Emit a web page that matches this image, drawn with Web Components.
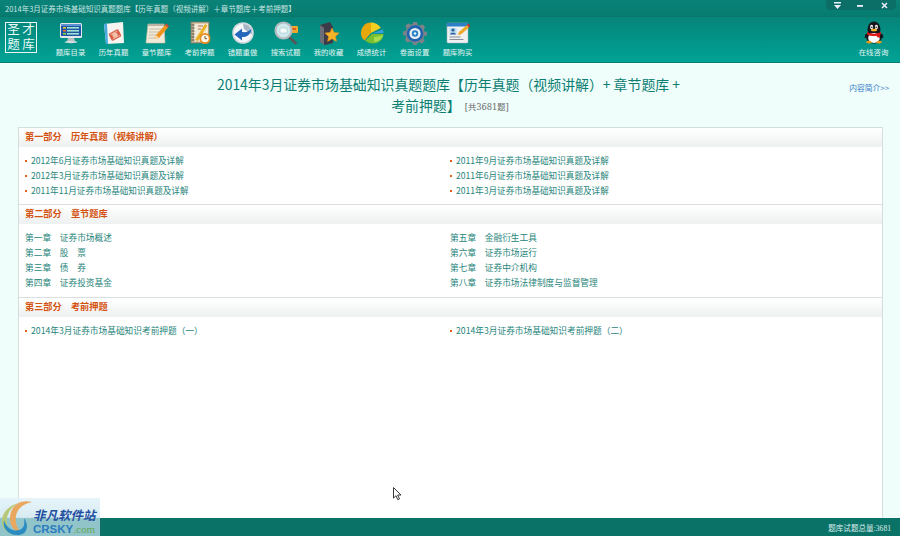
<!DOCTYPE html>
<html lang="zh"><head><meta charset="utf-8"><title>题库</title>
<style>
html,body{margin:0;padding:0;background:#effdfb}
body{font-family:"Noto Sans CJK SC","Liberation Sans",sans-serif}
svg{display:block}
</style></head><body>
<app-shell>
  <title-bar>2014年3月证券市场基础知识真题题库【历年真题（视频讲解）＋章节题库＋考前押题】</title-bar>
  <tool-bar>
    <tool-item label="题库目录"><svg width="24" height="24" viewBox="0 0 24 24"><rect x="1" y="2" width="22" height="15" rx="1.5" fill="#e4e8ea"/><rect x="2" y="3" width="20" height="12" fill="#1d57a6"/><rect x="2" y="3" width="20" height="2" fill="#5c93d0"/><rect x="4" y="6" width="3" height="1.6" fill="#f0c030"/><rect x="8" y="6" width="12" height="1.6" fill="#9fe0d0"/><rect x="4" y="9" width="3" height="1.6" fill="#e66a30"/><rect x="8" y="9" width="12" height="1.6" fill="#9fe0d0"/><rect x="4" y="12" width="3" height="1.6" fill="#8fd040"/><rect x="8" y="12" width="12" height="1.6" fill="#9fe0d0"/><path d="M9 17h6l1 3H8z" fill="#b7bec2"/><ellipse cx="12" cy="21" rx="6.5" ry="1.2" fill="#d8dde0"/></svg></tool-item>
    <tool-item label="历年真题"><svg width="24" height="24" viewBox="0 0 24 24"><path d="M2 3l19-2 1 21-18 1z" fill="#f6f4f0"/><path d="M2 3l3-.3 1 20.200-2 .1z" fill="#4aa8e0"/><g transform="rotate(-28 13 14)"><rect x="7.5" y="10" width="11" height="8" rx="1.5" fill="#d8604a"/><circle cx="13" cy="14" r="2.6" fill="#f3c0a8"/><rect x="9" y="11" width="8" height="1" fill="#f3b8a8"/><rect x="9" y="16" width="8" height="1" fill="#f3b8a8"/></g></svg></tool-item>
    <tool-item label="章节题库"><svg width="24" height="24" viewBox="0 0 24 24"><path d="M3 3h16l1 19H1z" fill="#f2ead8" stroke="#c9bfa8" stroke-width=".6"/><path d="M3 3h16v2H3z" fill="#b9b2a2"/><path d="M4 8h12M4 11h11M3.700 14h9M3.400 17h7" stroke="#b9b3a3" stroke-width=".8"/><path d="M9 18l2-4L20 4l3 2.500-9 10.500z" fill="#f0921e"/><path d="M20 4l1.500-1.500 2.500 2.500L23 6.500z" fill="#d84a30"/><path d="M9 18l2-4 3 3z" fill="#f6d9a8"/></svg></tool-item>
    <tool-item label="考前押题"><svg width="24" height="24" viewBox="0 0 24 24"><rect x="3" y="1" width="18" height="21" fill="#c2ad8a" stroke="#84765e" stroke-width=".7"/><rect x="6" y="2.500" width="14" height="18" fill="#f1ead9"/><path d="M3.500 4h3M3.500 7h3M3.500 10h3M3.500 13h3M3.500 16h3M3.500 19h3" stroke="#555" stroke-width="1"/><path d="M7 19L17 3l2.500 1.500L10 20z" fill="#e9b020"/><path d="M10 5h5M10 8h3" stroke="#b45a42" stroke-width=".9"/><circle cx="17" cy="17.500" r="5.500" fill="#e98a1c"/><circle cx="17" cy="17.500" r="3.800" fill="#fbf7e6"/><path d="M17 15v2.700h2" stroke="#6a4a20" stroke-width=".9" fill="none"/></svg></tool-item>
    <tool-item label="错题重做"><svg width="24" height="24" viewBox="0 0 24 24"><circle cx="12" cy="12" r="10.800" fill="#cfd6dc"/><circle cx="12" cy="12" r="9.300" fill="#f5f7f8"/><path d="M12 3a9 9 0 0 1 8.800 10.500L13 8z" fill="#a5b6c6"/><path d="M20.500 8c-1 6-5 8.500-9.500 8v3.500L3.500 13.500 11 7.500v3.500c4 .5 7-.5 9.500-3z" fill="#2666bd"/></svg></tool-item>
    <tool-item label="搜索试题"><svg width="24" height="24" viewBox="0 0 24 24"><rect x="15" y="5" width="9" height="7" rx="1" fill="#f0a828"/><rect x="17" y="7" width="5" height="2" fill="#d8601c"/><path d="M14 15l7.500 7" stroke="#54565a" stroke-width="3" stroke-linecap="round"/><circle cx="9.500" cy="9.500" r="8" fill="#cfeaec" stroke="#b4babf" stroke-width="2.200"/><rect x="6" y="7" width="7" height="5" fill="#f2fafa" stroke="#9fc0c6" stroke-width=".5"/></svg></tool-item>
    <tool-item label="我的收藏"><svg width="24" height="24" viewBox="0 0 24 24"><path d="M3 4l10-3 3 5v16l-8 2-5-3z" fill="#3c3c48"/><path d="M3 4l4 3v17l-4-3z" fill="#6a6e78"/><path d="M15 7l2.100 4.600 5 .5-3.700 3.300 1.100 5-4.500-2.600-4.400 2.600 1-5-3.700-3.300 5.100-.5z" fill="#f5b428" stroke="#e88f18" stroke-width=".6"/></svg></tool-item>
    <tool-item label="成绩统计"><svg width="24" height="24" viewBox="0 0 24 24"><path d="M11 12V1.500C5 1.500 1 6.500 1 12c0 3 1 5.500 3.500 7.500z" fill="#e8a80c"/><path d="M11 12V1.500c4.500 0 8 2.400 9.700 5.500z" fill="#f2cf20"/><path d="M12 12.500l10.800-4c.6 1.300 .7 2.500 .7 3.500z" fill="#36a0dc"/><path d="M12 13h11.500c-.2 5.500-5 9.500-10.500 9.500-3 0-6-1-7.700-3z" fill="#78c030"/><path d="M14 16c3 0 6-1 9-2-1 4-5 7-9 7z" fill="#a8dc50"/></svg></tool-item>
    <tool-item label="卷面设置"><svg width="24" height="24" viewBox="0 0 24 24"><path d="M10 1h4l.6 2.700 2.400 1 2.400-1.400 2.800 2.800-1.400 2.400 1 2.400L24 10.500v4l-2.700.6-1 2.400 1.400 2.400-2.800 2.800-2.400-1.400-2.400 1L14 24h-4l-.6-2.700-2.400-1-2.400 1.400-2.800-2.800 1.400-2.400-1-2.400L0 14.500v-4l2.700-.6 1-2.400L2.300 5.100l2.800-2.800 2.400 1.400 2.400-1z" fill="#7d8288"/><circle cx="12" cy="12.500" r="8.300" fill="#1f62ae"/><circle cx="12" cy="12.500" r="5.600" fill="#e8eef2"/><circle cx="12" cy="12.500" r="3.200" fill="#2c7ec8"/><circle cx="12" cy="12.500" r="1.300" fill="#dff"/></svg></tool-item>
    <tool-item label="题库购买"><svg width="24" height="24" viewBox="0 0 24 24"><rect x="1" y="2" width="21" height="20" rx="1" fill="#eef0f2" stroke="#a9b2ba" stroke-width=".5"/><rect x="1" y="2" width="21" height="3.500" fill="#2f7fc8"/><rect x="3.500" y="7" width="7" height="6.500" fill="#b9dcf0"/><circle cx="7" cy="9" r="1.600" fill="#2b5e9c"/><path d="M4 13.500c.5-2.500 5.500-2.500 6 0z" fill="#2b5e9c"/><path d="M3.500 16h11M3.500 18.500h14" stroke="#8a8f96" stroke-width="1"/><path d="M12 14l1-3 8-7 2 2.500-8 7z" fill="#f0a828"/><path d="M21 4l1.500-1.500 2 2.500L23 6.500z" fill="#c8342c"/></svg></tool-item>
    <tool-item slot="right" label="在线咨询"><svg width="24" height="24" viewBox="0 0 24 24"><ellipse cx="12" cy="8.500" rx="6.500" ry="8" fill="#16161c"/><ellipse cx="12" cy="16" rx="8" ry="6.500" fill="#16161c"/><ellipse cx="12" cy="17" rx="5.800" ry="5" fill="#fbfbfb"/><ellipse cx="9.600" cy="6" rx="1.500" ry="2.200" fill="#fff"/><ellipse cx="14.400" cy="6" rx="1.500" ry="2.200" fill="#fff"/><circle cx="9.800" cy="6.200" r=".8" fill="#111"/><circle cx="14.200" cy="6.200" r=".8" fill="#111"/><ellipse cx="12" cy="9" rx="3.200" ry="1.300" fill="#f4b020"/><path d="M5 11c4 2.200 10 2.200 14 0v2.500c-4 2-10 2-14 0z" fill="#e01818"/><path d="M14.500 13.500l3-.5.500 4-3-1z" fill="#e01818"/><path d="M3.500 13l2-.5-.5 4-2.500.5zM20.500 13l-2-.5.500 4 2.500.5z" fill="#16161c"/><path d="M4 21c2-2 5-1.500 6 .8-2 1-4.500 1-6-.8zM20 21c-2-2-5-1.500-6 .8 2 1 4.500 1 6-.8z" fill="#f09a14"/></svg></tool-item>
  </tool-bar>
  <main-area>
    <page-head slot="head"></page-head>
    <section-panel heading="第一部分　历年真题（视频讲解）">
      <link-row bullet>2012年6月证券市场基础知识真题及详解</link-row>
      <link-row bullet>2011年9月证券市场基础知识真题及详解</link-row>
      <link-row bullet>2012年3月证券市场基础知识真题及详解</link-row>
      <link-row bullet>2011年6月证券市场基础知识真题及详解</link-row>
      <link-row bullet>2011年11月证券市场基础知识真题及详解</link-row>
      <link-row bullet>2011年3月证券市场基础知识真题及详解</link-row>
    </section-panel>
    <section-panel heading="第二部分　章节题库" style="--fs:8.700px;--pb:7px">
      <link-row>第一章　证券市场概述</link-row>
      <link-row>第五章　金融衍生工具</link-row>
      <link-row>第二章　股　票</link-row>
      <link-row>第六章　证券市场运行</link-row>
      <link-row>第三章　债　券</link-row>
      <link-row>第七章　证券中介机构</link-row>
      <link-row>第四章　证券投资基金</link-row>
      <link-row>第八章　证券市场法律制度与监督管理</link-row>
    </section-panel>
    <section-panel heading="第三部分　考前押题" style="--fs:8.700px">
      <link-row bullet>2014年3月证券市场基础知识考前押题（一）</link-row>
      <link-row bullet>2014年3月证券市场基础知识考前押题（二）</link-row>
    </section-panel>
  </main-area>
  <status-bar>题库试题总量:3681</status-bar>
  <site-mark></site-mark>
  <mouse-cursor></mouse-cursor>
</app-shell>
<script>
function def(name, css, html){
  customElements.define(name, class extends HTMLElement{
    constructor(){super();const s=this.attachShadow({mode:'open'});
      s.innerHTML='<style>'+css+'</style>'+(typeof html==='function'?html(this):html);}
  });
}
def('app-shell',
 ':host{display:flex;flex-direction:column;position:relative;width:900px;height:536px;overflow:hidden;background:#effdfb}',
 '<slot></slot>');
def('title-bar',
 ':host{display:flex;align-items:center;justify-content:space-between;height:16px;flex:none;background:linear-gradient(#0b8277,#067c71);color:#c8e6e2;font-size:7.500px;padding:0 4px 0 5px;box-sizing:border-box}'+
 '.ctl{display:flex;align-items:center;width:70px;height:10px;align-self:flex-start;background:#0b6f67;border-radius:0 0 4px 4px;box-sizing:border-box}'+
 '.ctl span{flex:1;display:flex;justify-content:center}',
 '<span><slot></slot></span><div class="ctl">'+
 '<span><svg width="7" height="7" viewBox="0 0 7 7" style="display:block"><rect y="0" width="7" height="1.500" fill="#eef"/><path d="M0 3h7L3.500 7z" fill="#eef"/></svg></span>'+
 '<span><svg width="7" height="7" viewBox="0 0 7 7" style="display:block"><rect y="3" width="6" height="1.800" fill="#eef"/></svg></span>'+
 '<span><svg width="7" height="7" viewBox="0 0 7 7" style="display:block"><path d="M1 1l5 5M6 1L1 6" stroke="#eef" stroke-width="1.500"/></svg></span></div>');
def('tool-bar',
 ':host{display:flex;align-items:stretch;height:47px;flex:none;box-sizing:border-box;background:linear-gradient(#06847a,#00a395);border-top:1px solid #0a766c;border-bottom:1px solid #0b7c72;padding:0 5px 0 5px}'+
 '.logo{width:32px;height:31px;margin-top:5px;margin-right:12px;border:1px solid #e8f6f4;box-sizing:border-box;color:#eafaf7;font-family:"Liberation Sans","Noto Sans CJK SC",sans-serif;font-size:12.500px;display:grid;grid-template-columns:1fr 1fr;grid-template-rows:1fr 1fr;justify-items:center;align-items:center;flex:none}'+
 '.logo span{display:block;line-height:14px}'+
 '.items{display:flex;flex:1}.right{display:flex}',
 '<div class="logo"><span>圣</span><span>才</span><span>题</span><span>库</span></div><div class="items"><slot></slot></div><div class="right"><slot name="right"></slot></div>');
def('tool-item',
 ':host{display:flex;flex-direction:column;align-items:center;width:43px;flex:none;color:#e4f6f3;font-size:7.400px;box-sizing:border-box;padding-top:4px}'+
 '.ic{height:24px;margin-bottom:2px}.lb{line-height:10px;white-space:nowrap}',
 el=>'<div class="ic"><slot></slot></div><div class="lb">'+el.getAttribute('label')+'</div>');
def('main-area',
 ':host{display:flex;flex-direction:column;flex:1;min-height:0;padding:0 17px 0 18px;position:relative}'+
 '.panel{flex:1;min-height:0;display:flex;flex-direction:column;background:#fff;border:1px solid #d3dedd;border-bottom:0}',
 '<slot name="head"></slot><div class="panel"><slot></slot></div>');
def('page-head',
 ':host{display:flex;flex-direction:column;align-items:center;flex:none;height:64px;box-sizing:border-box;padding:11px 0 0;position:relative;color:#0c7d72;font-size:13.900px;line-height:21px;white-space:nowrap}'+
 '.l1{margin-right:4px}.l2{display:flex;align-items:center;margin-right:1px}'+
 '.c{font-size:8.300px;line-height:12px;color:#666;font-family:"DejaVu Serif","Noto Sans CJK SC",serif;margin-left:4px;margin-top:2px}'+
 'a{position:absolute;right:-6px;top:19px;font-size:7.800px;color:#3a80c8;line-height:12px}',
 '<div class="l1">2014年3月证券市场基础知识真题题库【历年真题（视频讲解）+ 章节题库 +</div><div class="l2"><span>考前押题】</span><span class="c">[共3681题]</span></div><a>内容简介&gt;&gt;</a>');
def('section-panel',
 ':host{display:block;flex:none;border-bottom:1px solid #dcdfdf}:host(:last-child){border-bottom:0}'+
 '.h{height:19px;line-height:17px;padding-left:6px;font-size:9.200px;font-weight:700;word-spacing:1px;color:#d4520f;background:linear-gradient(#fff,#eef1f1);white-space:pre}'+
 '.g{display:grid;grid-template-columns:425px 1fr;grid-auto-rows:15px;padding:6px 0 var(--pb,6px) 6px}',
 el=>'<div class="h">'+el.getAttribute('heading')+'</div><div class="g"><slot></slot></div>');
def('link-row',
 ':host{display:flex;align-items:center;font-size:var(--fs,8.600px);line-height:15px;color:#27857b;white-space:nowrap}'+
 '.b{width:2px;height:2px;background:#e2601a;margin-right:4px;flex:none}',
 el=>(el.hasAttribute('bullet')?'<span class="b"></span>':'')+'<span><slot></slot></span>');
def('status-bar',
 ':host{display:flex;align-items:center;justify-content:flex-end;height:18px;flex:none;background:#0b7268;color:#dceeec;font-family:"Liberation Serif","Noto Sans CJK SC",serif;font-size:7.600px;padding:0 9px 0 0;box-sizing:border-box}',
 '<slot></slot>');
def('site-mark',
 ':host{position:absolute;left:0;bottom:0;width:100px;height:38px;background:linear-gradient(rgba(228,243,250,.9),rgba(210,232,240,.85) 50%,rgba(160,205,212,.9) 55%,rgba(160,205,212,.9));overflow:hidden}'+
 'svg{position:absolute;left:0;top:0;display:block}'+
 '.a{position:absolute;left:33px;top:11px;font-family:"Liberation Sans","Noto Sans CJK SC",sans-serif;font-size:12.500px;font-weight:700;font-style:italic;color:#1f4fa0;white-space:nowrap;line-height:14px}'+
 '.b{position:absolute;left:33px;top:25px;font-family:"Liberation Sans",sans-serif;font-size:11.500px;font-weight:700;color:#2a7cc0;line-height:12px;white-space:nowrap}'+
 '.b i{font-family:"Liberation Serif",serif;font-style:normal;font-weight:400;font-size:11px;color:#5fa858}',
 '<svg width="36" height="38" viewBox="0 0 36 38"><path d="M32 4C20 1 10 8 10 20c0 8 4 13 11 15-4-5-6-10-5-17C17 11 23 6 32 4z" fill="#e8a860"/><path d="M18 5C8 8 1 16 2 25c.5 5 4 9 10 11-4-5-6-10-5-16C8 14 12 9 18 5z" fill="#b9c878"/><path d="M4 22c-2 8 4 15 13 15 6 0 9-2 10-8 0-2-.5-6-3-9 1 6 0 11-5 12-7 2-13-3-15-10z" fill="#2a8cc0"/></svg>'+
 '<span class="a">非凡软件站</span><span class="b">CRSKY<i>.com</i></span>');
def('mouse-cursor',
 ':host{position:absolute;left:393px;top:487px;width:10px;height:14px}svg{display:block}',
 '<svg width="10" height="14" viewBox="0 0 10 14"><path d="M.5.5v10.500l2.500-2.300 1.800 4 1.700-.8-1.800-3.900h3.300z" fill="#fff" stroke="#222" stroke-width=".9"/></svg>');
</script>
</body></html>
